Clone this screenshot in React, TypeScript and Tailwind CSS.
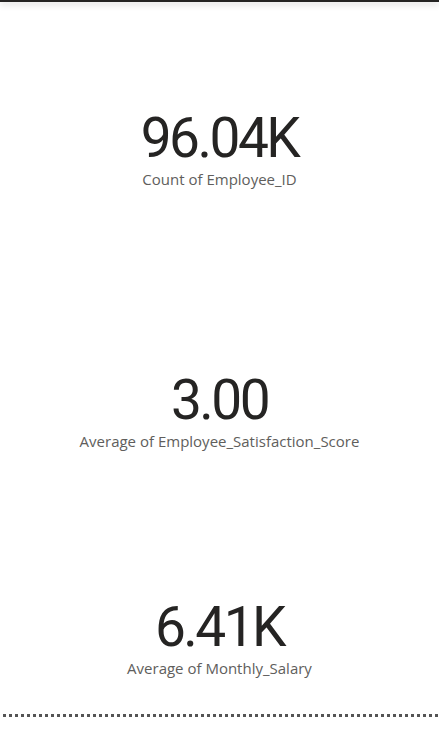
export default function App() {
  const cards = [
    { value: "96.04K", label: "Count of Employee_ID", mt: "mt-[108px]" },
    { value: "3.00", label: "Average of Employee_Satisfaction_Score", mt: "mt-[183px]" },
    { value: "6.41K", label: "Average of Monthly_Salary", mt: "mt-[148px]" },
  ];

  return (
    <div className="w-[439px] h-[730px] bg-white relative overflow-hidden">
      <div className="h-[2px] bg-[#252423] shadow-[0_2px_6px_rgba(0,0,0,0.25)]" />
      {cards.map((c) => (
        <div key={c.label} className={`flex flex-col items-center ${c.mt}`}>
          <div
            className="text-[55px] leading-[56px] text-[#252423] tracking-[-2.5px]"
            style={{ fontFamily: "Roboto, sans-serif" }}
          >
            {c.value}
          </div>
          <div
            className="mt-[3px] text-[15px] leading-[20px] text-[#605e5c]"
            style={{ fontFamily: '"Open Sans", sans-serif' }}
          >
            {c.label}
          </div>
        </div>
      ))}
      <div className="absolute left-0 right-0 top-[714px] h-[3px] bg-[repeating-linear-gradient(90deg,transparent_0_3px,#555_3px_6px)]" />
    </div>
  );
}
